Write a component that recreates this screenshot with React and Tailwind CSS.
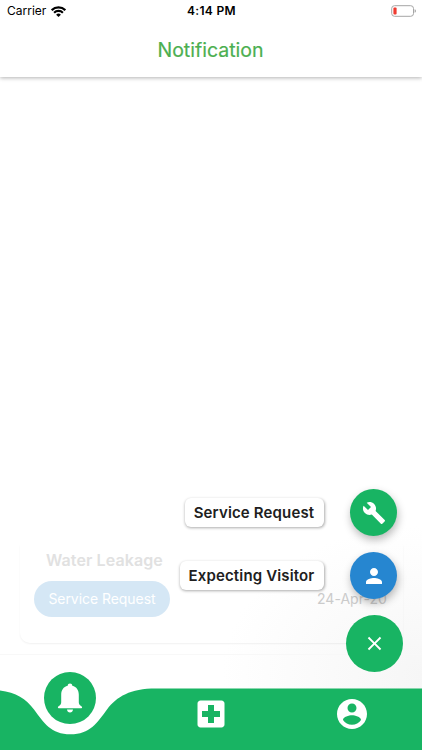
import { MdBuild, MdPerson, MdClose, MdLocalHospital } from "react-icons/md";

const actions = [
    { label: "Service Request", icon: MdBuild, width: "w-[139px]", color: "bg-[#18b463]" },
    { label: "Expecting Visitor", icon: MdPerson, width: "w-[144px]", color: "bg-[#2686d0]" },
];

function StatusBar() {
    return (
        <div className="grid grid-cols-[1fr_auto_1fr] items-center h-[22px] pl-[7px] pr-[6px] text-black">
            <div className="flex items-center gap-[5px]">
                <span className="text-[12px] leading-none">Carrier</span>
                <svg className="w-[15px] h-[11px]" viewBox="0 0 15 11" fill="none" stroke="currentColor" strokeWidth="2.2">
                    <path d="M.7 4.1a9.7 9.7 0 0 1 13.6 0" />
                    <path d="M3.1 6.7a6.3 6.3 0 0 1 8.8 0" />
                    <path d="M7.5 10.9 5.1 8.7a3.5 3.5 0 0 1 4.8 0z" fill="currentColor" stroke="none" />
                </svg>
            </div>
            <span className="text-center text-[12px] leading-none font-semibold tracking-[0.3px]">4:14 PM</span>
            <svg className="w-[25px] h-[12px] justify-self-end" viewBox="0 0 25 12" fill="none">
                <rect x=".7" y=".7" width="21.8" height="10.6" rx="2.8" stroke="#a5a5a5" />
                <rect x="2.4" y="2.4" width="3.2" height="7.2" rx="1" fill="#ef3a30" />
                <path d="M23.7 4.2c1.4.5 1.4 3.1 0 3.6z" fill="#8d8d8d" />
            </svg>
        </div>
    );
}

function RequestCard() {
    return (
        <div className="ml-5 mr-[19px] h-[98px] pl-[14px] pr-4 rounded-b-[10px] shadow-[0_1px_2px_rgba(0,0,0,0.06)]">
            <h2 className="pl-3 pt-[4px] text-[16px] leading-[22px] font-semibold tracking-[0.1px] text-[#e1e1e1]">Water Leakage</h2>
            <div className="mt-[10px] flex items-center justify-between">
                <span className="flex items-center justify-center w-[136px] h-[36px] pb-px rounded-full bg-[#d5e7f5] text-[14px] tracking-[-0.05px] text-white">
                    Service Request
                </span>
                <span className="pb-px text-[14px] tracking-[0.05px] text-[#cbcbcb]">24-Apr-20</span>
            </div>
        </div>
    );
}

function SpeedDial() {
    return (
        <div className="absolute right-[19px] bottom-[78px] flex flex-col items-end">
            {actions.map(({ label, icon: Icon, width, color }) => (
                <div key={label} className="flex items-center gap-[26px] mr-[6px] mb-4">
                    <span className={`${width} h-[29px] mb-px pt-[2px] pr-px flex items-center justify-center whitespace-nowrap rounded-[6px] bg-white text-[15px] font-semibold tracking-[0.15px] text-[#202020] shadow-[0.5px_1px_3px_rgba(0,0,0,0.33)]`}>
                        {label}
                    </span>
                    <button aria-label={label} className={`${color} w-[47px] h-[47px] flex items-center justify-center rounded-full text-white shadow-[1px_4px_8px_rgba(0,0,0,0.28)]`}>
                        <Icon className="w-6 h-6" />
                    </button>
                </div>
            ))}
            <button aria-label="Close" className="w-[57px] h-[57px] flex items-center justify-center rounded-full bg-[#18b463] text-white">
                <MdClose className="w-[23px] h-[23px]" />
            </button>
        </div>
    );
}

function BottomNav() {
    return (
        <nav className="relative h-[78px] grid grid-cols-3 items-start text-white">
            {/* bar with the notch below the active tab */}
            <svg className="absolute inset-0 w-full h-full" viewBox="0 0 422 78" fill="#18b463">
                <path d="M0 18.6C16 20.5 26 27 34 37.5C44 51 51 62.3 70.5 62.3C90 62.3 97 51 107 37.5C117 24.5 130 16.5 156 16.5H422V78H0z" />
            </svg>
            <button aria-label="Notifications" className="relative justify-self-center w-[52px] h-[52px] flex items-center justify-center rounded-full bg-[#18b463]">
                <svg className="w-[26px] h-[30px]" viewBox="0 0 26 30" fill="currentColor">
                    <path d="M13 .6c1.300 0 2.200.9 2.300 2.200 4.300 1 6.500 4.500 6.500 9v7.500c0 1.700.6 2.500 1.900 3.500.9.600 1.400 1 1.400 1.600 0 .5-.3.8-.8.8H1.700c-.5 0-.8-.3-.8-.8 0-.6.5-1 1.400-1.600 1.300-1 1.900-1.800 1.900-3.500v-7.500c0-4.500 2.200-8 6.500-9C10.800 1.500 11.700.6 13 .6z" />
                    <path d="M10 26.500h6c-.2 1.800-1.300 3-3 3s-2.800-1.200-3-3z" />
                </svg>
            </button>
            <button aria-label="Health" className="relative justify-self-center mt-6">
                <MdLocalHospital className="w-9 h-9" />
            </button>
            <button aria-label="Account" className="relative justify-self-center mt-6">
                <svg className="w-9 h-9" viewBox="0 0 24 24" fill="currentColor">
                    <path d="M12 2C6.48 2 2 6.48 2 12s4.48 10 10 10 10-4.48 10-10S17.52 2 12 2zm0 3c1.66 0 3 1.34 3 3s-1.34 3-3 3-3-1.34-3-3 1.34-3 3-3zm0 14.2c-2.5 0-4.71-1.28-6-3.22.03-1.99 4-3.08 6-3.08 1.99 0 5.97 1.09 6 3.08-1.29 1.94-3.5 3.22-6 3.22z" />
                </svg>
            </button>
        </nav>
    );
}

export default function App() {
    return (
        <div className="relative w-[422px] h-[750px] overflow-hidden flex flex-col bg-radial-[200px_150px_at_100%_90%] from-[#f6f6f6] to-white font-[Inter,sans-serif]">
            <header className="h-[77px] bg-white shadow-[0_1px_4px_rgba(0,0,0,0.3)]">
                <StatusBar />
                <h1 className="mt-[14px] pr-px text-center text-[19.5px] leading-7 text-[#4caf50] [-webkit-text-stroke:0.2px_#4caf50]">Notification</h1>
            </header>
            <main className="flex-1 flex flex-col justify-end">
                <RequestCard />
                <div className="mt-[11px] mb-[17px] border-t border-[#f8f8f8]" />
            </main>
            <BottomNav />
            <SpeedDial />
        </div>
    );
}
